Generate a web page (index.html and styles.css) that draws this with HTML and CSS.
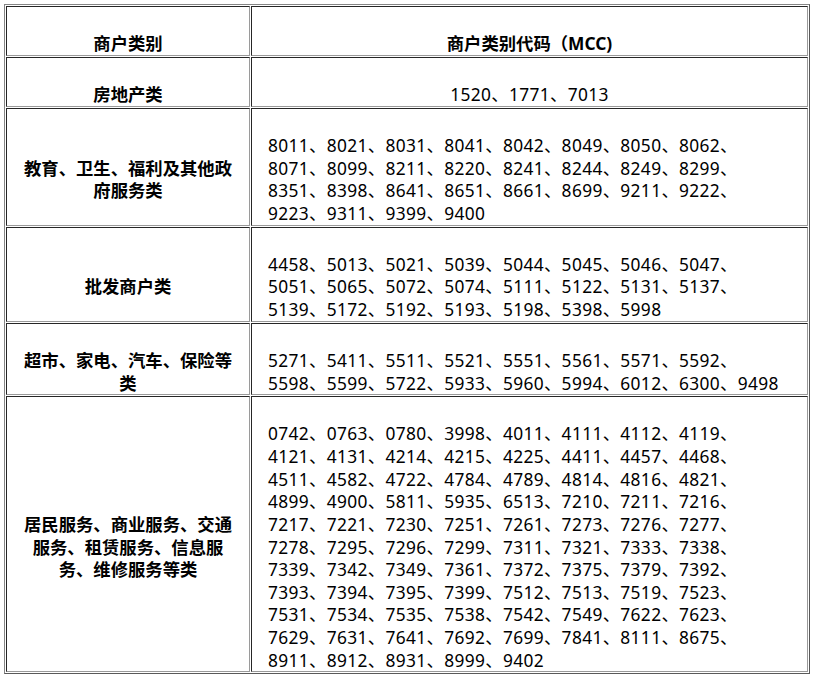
FILE: index.html
```html
<!DOCTYPE html>
<html lang="zh-CN">
<head>
<meta charset="utf-8">
<title>商户类别代码（MCC）</title>
<link rel="stylesheet" href="styles.css">
</head>
<body>
<table class="mcc-table">
  <colgroup>
    <col class="col-cat">
    <col class="col-code">
  </colgroup>
  <tr>
    <th class="cat">商户类别</th>
    <th class="code center">商户类别代码（MCC)</th>
  </tr>
  <tr>
    <td class="cat">房地产类</td>
    <td class="code center">1520、1771、7013</td>
  </tr>
  <tr>
    <td class="cat">教育、卫生、福利及其他政府服务类</td>
    <td class="code">8011、8021、8031、8041、8042、8049、8050、8062、<br>8071、8099、8211、8220、8241、8244、8249、8299、<br>8351、8398、8641、8651、8661、8699、9211、9222、<br>9223、9311、9399、9400</td>
  </tr>
  <tr>
    <td class="cat">批发商户类</td>
    <td class="code">4458、5013、5021、5039、5044、5045、5046、5047、<br>5051、5065、5072、5074、5111、5122、5131、5137、<br>5139、5172、5192、5193、5198、5398、5998</td>
  </tr>
  <tr>
    <td class="cat">超市、家电、汽车、保险等类</td>
    <td class="code">5271、5411、5511、5521、5551、5561、5571、5592、<br>5598、5599、5722、5933、5960、5994、6012、6300、9498</td>
  </tr>
  <tr>
    <td class="cat">居民服务、商业服务、交通服务、租赁服务、信息服务、维修服务等类</td>
    <td class="code">0742、0763、0780、3998、4011、4111、4112、4119、<br>4121、4131、4214、4215、4225、4411、4457、4468、<br>4511、4582、4722、4784、4789、4814、4816、4821、<br>4899、4900、5811、5935、6513、7210、7211、7216、<br>7217、7221、7230、7251、7261、7273、7276、7277、<br>7278、7295、7296、7299、7311、7321、7333、7338、<br>7339、7342、7349、7361、7372、7375、7379、7392、<br>7393、7394、7395、7399、7512、7513、7519、7523、<br>7531、7534、7535、7538、7542、7549、7622、7623、<br>7629、7631、7641、7692、7699、7841、8111、8675、<br>8911、8912、8931、8999、9402</td>
  </tr>
</table>
</body>
</html>
```

FILE: styles.css
```css
html, body {
  margin: 0;
  padding: 0;
  background: #ffffff;
}

body {
  padding: 4px;
  font-family: "Noto Sans", "Noto Sans CJK SC", sans-serif;
  font-size: 17.33px;
  line-height: 22.62px;
  color: #000000;
}

.mcc-table {
  box-sizing: border-box;
  width: 806px;
  table-layout: fixed;
  border-collapse: separate;
  border-spacing: 1px;
  border: 1px solid;
  border-color: #858585 #5a5a5a #5a5a5a #858585;
}

.col-cat {
  width: 244px;
}

.col-code {
  width: 557px;
}

.mcc-table th,
.mcc-table td {
  box-sizing: border-box;
  border: 1px solid;
  border-color: #262626 #9a9a9a #9a9a9a #262626;
  padding: 25.25px 16px 0;
  vertical-align: middle;
}

.cat {
  text-align: center;
  font-weight: 700;
}

.code {
  text-align: left;
  font-weight: 400;
  letter-spacing: 0.35px;
  white-space: nowrap;
}

th.code {
  font-weight: 700;
  letter-spacing: 0;
}

.center {
  text-align: center;
}
```
